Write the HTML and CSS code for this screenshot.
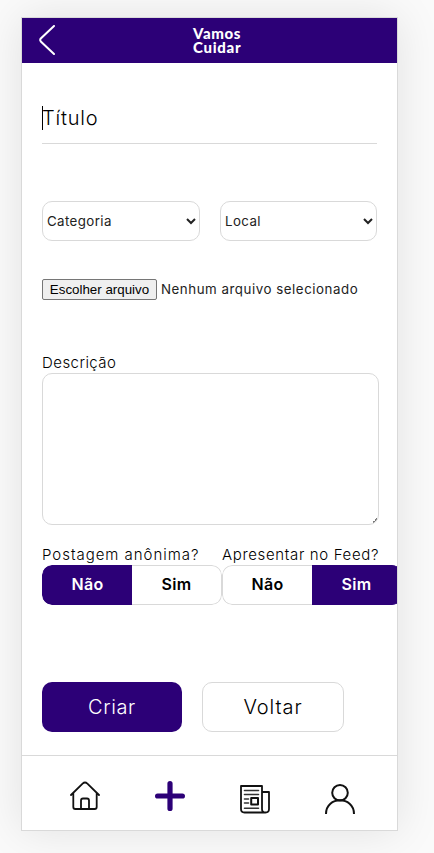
FILE: index.html
```html
<!DOCTYPE html>
<html lang="pt-BR">
<head>
<meta charset="utf-8">
<meta name="viewport" content="width=device-width, initial-scale=1">
<title>Vamos Cuidar</title>
<link rel="stylesheet" href="styles.css">
</head>
<body>
<div class="phone">
  <header class="topbar">
    <svg class="back" viewBox="0 0 16 30"><path d="M15 1 1.8 13.4Q.6 15 1.8 16.5L15 29"/></svg>
    <div class="logo"><span class="logo-top">Vamos</span><span class="logo-bottom">Cuidar</span></div>
  </header>
  <main class="form">
    <div class="title-field"><span class="caret"></span><span class="title-text">Título</span></div>
    <div class="selects">
      <select class="select"><option>Categoria</option></select>
      <select class="select"><option>Local</option></select>
    </div>
    <div class="file"><button class="file-button">Escolher arquivo</button><span class="file-name">Nenhum arquivo selecionado</span></div>
    <label class="label label-desc" for="descricao">Descrição</label>
    <textarea class="description" id="descricao"></textarea>
    <div class="toggles">
      <div class="group">
        <span class="label label-anon">Postagem anônima?</span>
        <div class="toggle"><span class="option on">Não</span><span class="option">Sim</span></div>
      </div>
      <div class="group">
        <span class="label label-feed">Apresentar no Feed?</span>
        <div class="toggle"><span class="option">Não</span><span class="option on">Sim</span></div>
      </div>
    </div>
    <div class="actions">
      <button class="action primary">Criar</button>
      <button class="action secondary">Voltar</button>
    </div>
  </main>
  <nav class="nav">
    <svg class="icon" viewBox="0 0 30 30"><path d="M1 14 12.6 2.6Q15 .4 17.4 2.6L29 14M3.3 12V26Q3.3 28 5.3 28H24.7Q26.7 28 26.7 26V12M11 28V19.5Q11 17.5 13 17.5H17Q19 17.5 19 19.5V28"/></svg>
    <svg class="icon plus" viewBox="0 0 30 30"><path d="M15 2.6V27.4M2.6 15H27.4"/></svg>
    <svg class="icon news" viewBox="0 0 30 30"><path d="M22 24V2H1V25Q1 28.5 4.5 28.5H25.5Q29 28.5 29 25V8H22V25Q22 28.5 25.5 28.5"/><path class="picture" d="M11.2 14H18V20.5H11.2Z"/><path class="lines" d="M4.5 6.5H18.5M4.5 10.5H18.5M4.5 15H8.5M4.5 19H8.5M4.5 24.3H18.5"/></svg>
    <svg class="icon user" viewBox="0 0 30 30"><circle cx="15" cy="8.8" r="7.8"/><path d="M1 30C1 11.8 29 11.8 29 30"/></svg>
  </nav>
</div>
</body>
</html>
```
FILE: styles.css
```css
* { box-sizing: border-box; }
body {
  margin: 0;
  padding: 17px 0 0 21px;
  height: 853px;
  overflow: hidden;
  background: #fafafa;
  color: #000;
  font-family: Inter, "Open Sans", sans-serif;
}
.phone {
  display: flex;
  flex-direction: column;
  width: 377px;
  height: 814px;
  overflow: hidden;
  background: #fff;
  border: 1px solid #d9d9d9;
  box-shadow: 0 0 42px rgba(0, 0, 0, .1);
}
.topbar {
  display: flex;
  flex: none;
  height: 45px;
  padding: 7px 0 0 17px;
  background: #2c0077;
}
.back { width: 16px; height: 30px; fill: none; stroke: #fff; stroke-width: 2; stroke-linecap: round; }
.logo {
  display: flex;
  flex-direction: column;
  margin-left: 138px;
  padding-top: 1px;
  color: #fff;
  font: 900 15px/14px Lato, sans-serif;
  letter-spacing: .6px;
}
.logo-bottom { letter-spacing: .7px; }
.form { flex: 1; padding: 0 18px 0 20px; }
.title-field {
  display: flex;
  align-items: center;
  width: 335px;
  height: 51px;
  margin-top: 30px;
  border-bottom: 1px solid #d9d9d9;
  font-size: 20px;
  font-weight: 350;
  letter-spacing: .8px;
}
.caret { width: 1px; height: 24px; margin-right: -1px; background: #000; }
.selects { display: grid; grid-template-columns: 158px 157px; gap: 20px; margin-top: 57px; }
.select {
  height: 40px;
  padding: 0;
  border: 1px solid #d9d9d9;
  border-radius: 10px;
  background: #fff;
  color: #222;
  font-family: Inter, sans-serif;
  font-size: 13.3px;
  letter-spacing: .4px;
}
.file { display: flex; align-items: center; gap: 4px; height: 21px; margin-top: 38px; font-size: 13.3px; color: #222; white-space: nowrap; }
.file-name { margin-top: -2px; letter-spacing: .54px; }
.file-button {
  width: 115px;
  height: 21px;
  padding: 0;
  border: 1px solid #767676;
  border-radius: 2px;
  background: #efefef;
  color: #000;
  font: 13.33px "Liberation Sans", sans-serif;
}
.label { display: block; height: 20px; font-size: 15px; font-weight: 350; line-height: 20px; white-space: nowrap; }
.label-desc { margin-top: 53px; letter-spacing: .45px; }
.label-anon { letter-spacing: .97px; }
.label-feed { letter-spacing: .65px; }
.description {
  display: block;
  width: 337px;
  height: 152px;
  border: 1px solid #d9d9d9;
  border-radius: 10px;
  background: linear-gradient(135deg, transparent 50%, #777 50%, #777 65%, transparent 65%) right 1px bottom 1px / 5px 5px no-repeat #fff;
  resize: none;
}
.toggles { display: flex; margin-top: 20px; }
.group { flex: none; width: 180px; }
.toggle { display: flex; height: 40px; border-radius: 10px; overflow: hidden; }
.option { width: 90px; border: 1px solid #d9d9d9; font-size: 16px; font-weight: 600; line-height: 36px; text-align: center; letter-spacing: .3px; }
.option:first-child { border-right: 0; border-radius: 10px 0 0 10px; }
.option:last-child { border-left: 0; border-radius: 0 10px 10px 0; }
.option.on { background: #2c0077; border-color: #2c0077; color: #fff; }
.actions { display: flex; gap: 20px; margin-top: 77px; }
.action { height: 50px; padding: 0; border-radius: 10px; font-family: Inter, sans-serif; font-size: 20px; font-weight: 350; letter-spacing: .6px; }
.primary { width: 140px; border: 0; background: #2c0077; color: #fff; }
.secondary { width: 142px; border: 1px solid #d9d9d9; background: #fff; color: #000; letter-spacing: .9px; }
.nav { display: flex; flex: none; justify-content: space-between; height: 75px; padding: 25px 42px 0 48px; border-top: 1px solid #d9d9d9; }
.icon { width: 30px; height: 30px; fill: none; stroke: #111; stroke-width: 1.8; stroke-linecap: round; stroke-linejoin: round; }
.plus { stroke: #2c0077; stroke-width: 5.2; }
.news, .user { margin-top: 3px; }
.user { stroke-width: 2; stroke-linecap: butt; }
.news .lines { stroke: #333; stroke-width: 1.6; }
.news .picture { stroke-width: 2; }
```
